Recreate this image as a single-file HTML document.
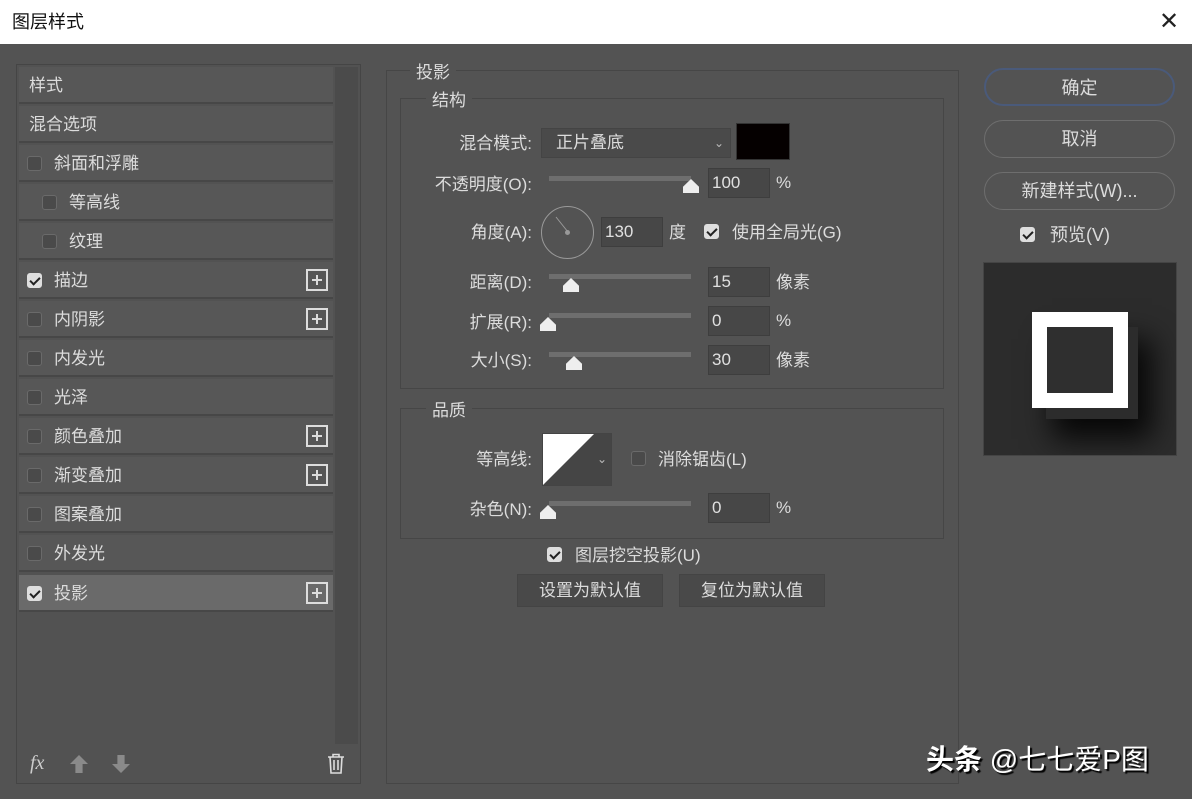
<!DOCTYPE html>
<html><head><meta charset="utf-8"><style>
*{margin:0;padding:0;box-sizing:border-box}
body{width:1192px;height:799px;background:#535353;font-family:"Liberation Sans","Noto Sans CJK SC",sans-serif;color:#dcdcdc;position:relative;overflow:hidden;font-size:17px}
.a{position:absolute}
.title{left:0;top:0;width:1192px;height:44px;background:#fff;color:#111;font-size:18px;line-height:44px;padding-left:12px}
.row{position:absolute;left:19px;width:314px;height:37px;background:#575757;border-bottom:2px solid #474747;line-height:37px}
.cb{position:absolute;width:15px;height:15px;border:1px solid #6a6a6a;background:#4a4a4a;border-radius:3px}
.cb.on{background:#dedede;border-color:#dedede}
.cb.on:after{content:"";position:absolute;left:4px;top:1px;width:4px;height:8px;border:solid #222;border-width:0 2.5px 2.5px 0;transform:rotate(45deg)}
.plus{position:absolute;right:5px;top:7px;width:22px;height:22px;border:2px solid #ddd}
.plus:before{content:"";position:absolute;left:4px;top:8px;width:10px;height:2px;background:#ddd}
.plus:after{content:"";position:absolute;left:8px;top:4px;width:2px;height:10px;background:#ddd}
.lbl{position:absolute;text-align:right;font-size:17px;margin-top:-3px}
.inp{position:absolute;width:62px;height:30px;background:#474747;border:1px solid #3e3e3e;line-height:28px;padding-left:3px;color:#e0e0e0}
.track{position:absolute;height:5px;background:#6e6e6e;width:142px;left:549px}
.thumb{position:absolute;width:16px;height:14px;background:#eee;clip-path:polygon(50% 0,100% 55%,100% 100%,0 100%,0 55%)}
.btn{position:absolute;left:984px;width:191px;height:38px;border:1px solid #6e6e6e;border-radius:19px;text-align:center;line-height:36px;font-size:18px}
.u{margin-top:-3px}
</style></head><body>
<div class="a title">图层样式</div>
<div class="a" style="left:1159px;top:10px;font-size:24px;color:#222;line-height:24px">✕</div>

<div class="a" style="left:16px;top:64px;width:345px;height:720px;border:1px solid #454545;background:#525252"></div>
<div class="a" style="left:335px;top:67px;width:23px;height:677px;background:#4b4b4b"></div>
<div class="row" style="top:67px;padding-left:10px">样式</div>
<div class="row" style="top:106px;padding-left:10px">混合选项</div>
<div class="row" style="top:145px;padding-left:35px"><span class="cb" style="left:8px;top:11px"></span>斜面和浮雕</div>
<div class="row" style="top:184px;padding-left:50px"><span class="cb" style="left:23px;top:11px"></span>等高线</div>
<div class="row" style="top:223px;padding-left:50px"><span class="cb" style="left:23px;top:11px"></span>纹理</div>
<div class="row" style="top:262px;padding-left:35px"><span class="cb on" style="left:8px;top:11px"></span>描边<span class="plus"></span></div>
<div class="row" style="top:301px;padding-left:35px"><span class="cb" style="left:8px;top:11px"></span>内阴影<span class="plus"></span></div>
<div class="row" style="top:340px;padding-left:35px"><span class="cb" style="left:8px;top:11px"></span>内发光</div>
<div class="row" style="top:379px;padding-left:35px"><span class="cb" style="left:8px;top:11px"></span>光泽</div>
<div class="row" style="top:418px;padding-left:35px"><span class="cb" style="left:8px;top:11px"></span>颜色叠加<span class="plus"></span></div>
<div class="row" style="top:457px;padding-left:35px"><span class="cb" style="left:8px;top:11px"></span>渐变叠加<span class="plus"></span></div>
<div class="row" style="top:496px;padding-left:35px"><span class="cb" style="left:8px;top:11px"></span>图案叠加</div>
<div class="row" style="top:535px;padding-left:35px"><span class="cb" style="left:8px;top:11px"></span>外发光</div>
<div class="row" style="top:575px;padding-left:35px;background:#6a6a6a"><span class="cb on" style="left:8px;top:11px"></span>投影<span class="plus"></span></div>
<div class="a" style="left:30px;top:752px;font-style:italic;font-size:20px;color:#ccc;font-family:'Liberation Serif',serif">fx</div>
<div class="a" style="left:70px;top:755px;width:18px;height:18px;background:#8a8a8a;clip-path:polygon(50% 0,100% 50%,70% 50%,70% 100%,30% 100%,30% 50%,0 50%)"></div>
<div class="a" style="left:112px;top:755px;width:18px;height:18px;background:#8a8a8a;clip-path:polygon(30% 0,70% 0,70% 50%,100% 50%,50% 100%,0 50%,30% 50%)"></div>
<svg class="a" style="left:327px;top:753px" width="18" height="21" viewBox="0 0 18 21" fill="none" stroke="#ddd" stroke-width="1.6"><path d="M1 4h16M6 4V1.5h6V4M3 4l1 16h10l1-16M7 7v10M11 7v10"/></svg>

<div class="a" style="left:386px;top:70px;width:573px;height:714px;border:1px solid #464646"></div>
<div class="a u" style="left:410px;top:61px;padding:0 6px;background:#535353">投影</div>
<div class="a" style="left:400px;top:98px;width:544px;height:291px;border:1px solid #464646"></div>
<div class="a u" style="left:426px;top:89px;padding:0 6px;background:#535353">结构</div>
<div class="lbl" style="left:420px;width:112px;top:132px">混合模式:</div>
<div class="a" style="left:541px;top:128px;width:190px;height:30px;background:#4a4a4a;border:1px solid #444;line-height:28px;padding-left:14px">正片叠底<span style="position:absolute;right:6px;font-size:12px;color:#bbb">⌄</span></div>
<div class="a" style="left:736px;top:123px;width:54px;height:37px;background:#050000;border:1px solid #333"></div>
<div class="lbl" style="left:400px;width:132px;top:173px">不透明度(O):</div>
<div class="track" style="top:176px"></div><div class="thumb" style="left:683px;top:179px"></div>
<div class="inp" style="left:708px;top:168px">100</div><div class="a" style="left:776px;top:173px">%</div>
<div class="lbl" style="left:440px;width:92px;top:221px">角度(A):</div>
<div class="a" style="left:541px;top:206px;width:53px;height:53px;border:1px solid #999;border-radius:50%"></div>
<div class="a" style="left:565px;top:230px;width:5px;height:5px;background:#999;border-radius:50%"></div>
<svg class="a" style="left:541px;top:206px" width="53" height="53"><line x1="15" y1="11" x2="27" y2="26" stroke="#999" stroke-width="1"/></svg>
<div class="inp" style="left:601px;top:217px">130</div><div class="a u" style="left:669px;top:221px">度</div>
<span class="cb on" style="left:704px;top:224px"></span><div class="a u" style="left:732px;top:221px">使用全局光(G)</div>
<div class="lbl" style="left:440px;width:92px;top:271px">距离(D):</div>
<div class="track" style="top:274px"></div><div class="thumb" style="left:563px;top:278px"></div>
<div class="inp" style="left:708px;top:267px">15</div><div class="a u" style="left:776px;top:271px">像素</div>
<div class="lbl" style="left:440px;width:92px;top:311px">扩展(R):</div>
<div class="track" style="top:313px"></div><div class="thumb" style="left:540px;top:317px"></div>
<div class="inp" style="left:708px;top:306px">0</div><div class="a" style="left:776px;top:311px">%</div>
<div class="lbl" style="left:440px;width:92px;top:349px">大小(S):</div>
<div class="track" style="top:352px"></div><div class="thumb" style="left:566px;top:356px"></div>
<div class="inp" style="left:708px;top:345px">30</div><div class="a u" style="left:776px;top:349px">像素</div>

<div class="a" style="left:400px;top:408px;width:544px;height:131px;border:1px solid #464646"></div>
<div class="a u" style="left:426px;top:399px;padding:0 6px;background:#535353">品质</div>
<div class="lbl" style="left:440px;width:92px;top:448px">等高线:</div>
<div class="a" style="left:542px;top:433px;width:70px;height:53px;background:#454545;border:1px solid #444"></div>
<div class="a" style="left:543px;top:434px;width:51px;height:51px;background:#fff;clip-path:polygon(0 0,100% 0,0 100%)"></div>
<div class="a" style="left:597px;top:452px;font-size:12px;color:#bbb">⌄</div>
<span class="cb" style="left:631px;top:451px"></span><div class="a u" style="left:658px;top:448px">消除锯齿(L)</div>
<div class="lbl" style="left:440px;width:92px;top:498px">杂色(N):</div>
<div class="track" style="top:501px"></div><div class="thumb" style="left:540px;top:505px"></div>
<div class="inp" style="left:708px;top:493px">0</div><div class="a" style="left:776px;top:498px">%</div>
<span class="cb on" style="left:547px;top:547px"></span><div class="a u" style="left:575px;top:544px">图层挖空投影(U)</div>
<div class="a" style="left:517px;top:574px;width:146px;height:33px;background:#494949;border:1px solid #444;text-align:center;line-height:31px">设置为默认值</div>
<div class="a" style="left:679px;top:574px;width:146px;height:33px;background:#494949;border:1px solid #444;text-align:center;line-height:31px">复位为默认值</div>

<div class="btn" style="top:68px;border:2px solid #4a5a7a">确定</div>
<div class="btn" style="top:120px">取消</div>
<div class="btn" style="top:172px">新建样式(W)...</div>
<span class="cb on" style="left:1020px;top:227px"></span><div class="a" style="left:1050px;top:221px;font-size:18px">预览(V)</div>
<div class="a" style="left:983px;top:262px;width:194px;height:194px;background:#2c2c2c;border:1px solid #444;overflow:hidden">
<div class="a" style="left:62px;top:64px;width:92px;height:92px;box-shadow:10px 16px 28px 4px rgba(0,0,0,.85)"></div>
<div class="a" style="left:48px;top:49px;width:96px;height:96px;border:15px solid #fff;background:#2f2f2f"></div></div>
<div class="a" style="left:926px;top:738px;font-size:28px;color:#fff;font-weight:bold;text-shadow:2px 2px 1px #000">头条 <span style="font-weight:normal">@七七爱P图</span></div>
</body></html>
